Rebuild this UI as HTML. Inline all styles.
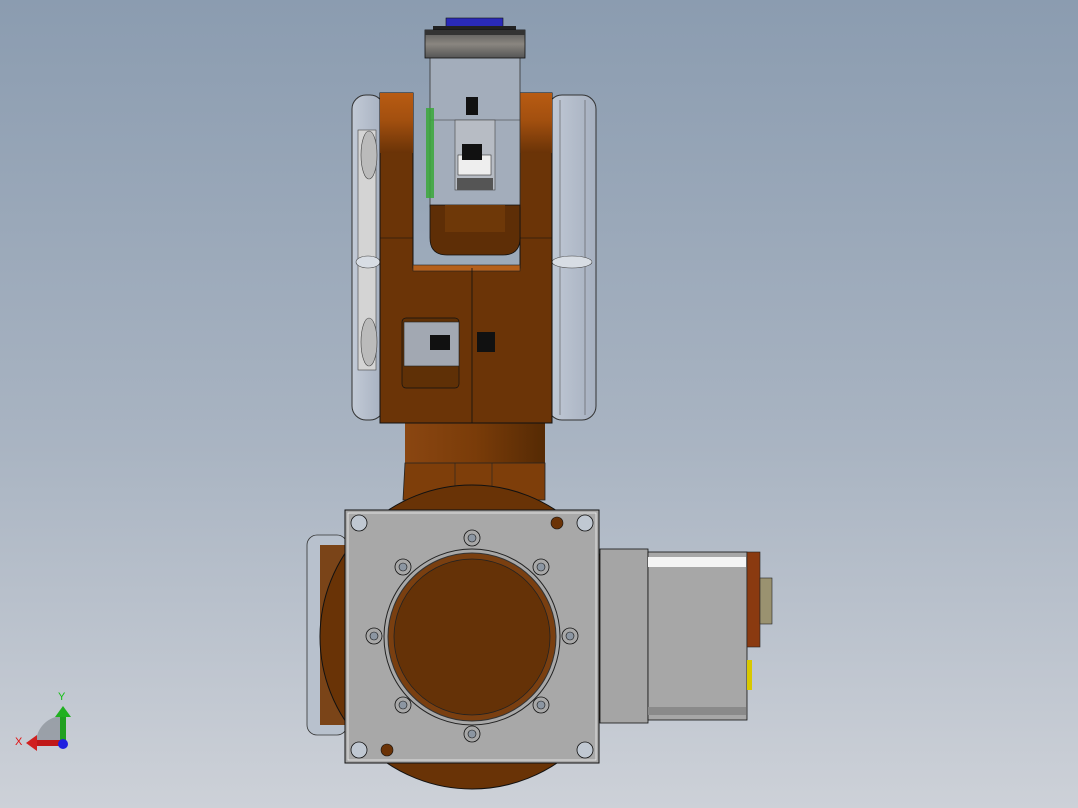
<!DOCTYPE html><html><head><style>html,body{margin:0;padding:0}body{width:1078px;height:808px;overflow:hidden;background:linear-gradient(#8b9cb0,#a9b4c2 55%,#cdd1d8)}svg{display:block}</style></head><body>
<svg width="1078" height="808" viewBox="0 0 1078 808" xmlns="http://www.w3.org/2000/svg" font-family="Liberation Sans, sans-serif">
<defs>
<linearGradient id="org" x1="0" y1="0" x2="0" y2="1"><stop offset="0" stop-color="#b85b12"/><stop offset="0.45" stop-color="#a3500f"/><stop offset="1" stop-color="#6a3307"/></linearGradient>
<linearGradient id="neck" x1="0" y1="0" x2="1" y2="0"><stop offset="0" stop-color="#8a4611"/><stop offset="0.5" stop-color="#7a3c09"/><stop offset="1" stop-color="#552a04"/></linearGradient>
<linearGradient id="cov" x1="0" y1="0" x2="1" y2="0"><stop offset="0" stop-color="#c2cad6"/><stop offset="1" stop-color="#a6b0c0"/></linearGradient>
<linearGradient id="flg" x1="0" y1="0" x2="0" y2="1"><stop offset="0" stop-color="#555"/><stop offset="0.5" stop-color="#8a8680"/><stop offset="1" stop-color="#555"/></linearGradient>
</defs>
<rect x="352" y="95" width="32" height="325" rx="14" fill="url(#cov)" stroke="#333" stroke-width="1"/>
<rect x="548" y="95" width="48" height="325" rx="14" fill="url(#cov)" stroke="#333" stroke-width="1"/>
<line x1="560" y1="100" x2="560" y2="415" stroke="#555" stroke-width=".6"/>
<line x1="585" y1="100" x2="585" y2="415" stroke="#555" stroke-width=".6"/>
<rect x="358" y="130" width="18" height="240" fill="#d4d4d4" stroke="#444" stroke-width=".6"/>
<ellipse cx="369" cy="155" rx="8" ry="24" fill="#bbb" stroke="#444" stroke-width=".6"/>
<ellipse cx="369" cy="342" rx="8" ry="24" fill="#bbb" stroke="#444" stroke-width=".6"/>
<ellipse cx="368" cy="262" rx="12" ry="6" fill="#d8dde4" stroke="#444" stroke-width=".6"/>
<ellipse cx="572" cy="262" rx="20" ry="6" fill="#d8dde4" stroke="#444" stroke-width=".6"/>
<rect x="405" y="418" width="140" height="48" fill="url(#neck)"/>
<path d="M380 93 H413 V268 H520 V93 H552 V423 H380 Z" fill="#6b3407" stroke="#111" stroke-width="1"/>
<rect x="380" y="93" width="33" height="60" fill="url(#org)"/>
<rect x="520" y="93" width="32" height="60" fill="url(#org)"/>
<rect x="413" y="265" width="107" height="6" fill="#b5601c" stroke="#222" stroke-width=".6"/>
<line x1="472" y1="268" x2="472" y2="423" stroke="#111" stroke-width=".8"/>
<line x1="380" y1="238" x2="413" y2="238" stroke="#111" stroke-width=".6"/>
<line x1="520" y1="238" x2="552" y2="238" stroke="#111" stroke-width=".6"/>
<rect x="430" y="57" width="90" height="150" fill="#a3adbb" stroke="#333" stroke-width=".8"/>
<line x1="430" y1="120" x2="520" y2="120" stroke="#333" stroke-width=".5"/>
<path d="M430 205 H520 V238 Q520 255 503 255 H447 Q430 255 430 238 Z" fill="#5e2e06" stroke="#111" stroke-width=".8"/>
<rect x="445" y="205" width="60" height="27" fill="#6e3808"/>
<rect x="455" y="120" width="40" height="70" fill="#b7bcc4" stroke="#444" stroke-width=".6"/>
<rect x="458" y="155" width="33" height="20" fill="#eee" stroke="#333" stroke-width=".6"/>
<rect x="462" y="144" width="20" height="16" fill="#111"/>
<rect x="466" y="97" width="12" height="18" fill="#111"/>
<rect x="457" y="178" width="36" height="12" fill="#555"/>
<rect x="426" y="108" width="8" height="90" fill="#3aa83a" opacity=".85"/>
<rect x="446" y="18" width="57" height="10" fill="#2a2ab8" stroke="#111" stroke-width=".6"/>
<rect x="433" y="26" width="83" height="5" fill="#222"/>
<rect x="425" y="30" width="100" height="28" fill="url(#flg)" stroke="#111" stroke-width=".8"/>
<rect x="425" y="30" width="100" height="5" fill="#333"/>
<rect x="402" y="318" width="57" height="70" rx="4" fill="#5f3006" stroke="#111" stroke-width=".7"/>
<rect x="404" y="322" width="55" height="44" fill="#a2a8b2" stroke="#222" stroke-width=".6"/>
<rect x="430" y="335" width="20" height="15" fill="#111"/>
<rect x="477" y="332" width="18" height="20" fill="#111"/>
<path d="M405 463 H545 V500 H403 Z" fill="#7e3e0a" stroke="#222" stroke-width=".8"/>
<line x1="455" y1="463" x2="455" y2="500" stroke="#222" stroke-width=".6"/>
<line x1="492" y1="463" x2="492" y2="500" stroke="#222" stroke-width=".6"/>
<rect x="307" y="535" width="40" height="200" rx="10" fill="#b8c1cd" stroke="#333" stroke-width=".8"/>
<rect x="320" y="545" width="28" height="180" fill="#7a4418"/>
<circle cx="472" cy="637" r="152" fill="#693306" stroke="#111" stroke-width="1"/>
<rect x="600" y="549" width="48" height="174" fill="#a5a5a5" stroke="#111" stroke-width=".8"/>
<rect x="648" y="552" width="99" height="168" fill="#a7a7a7" stroke="#111" stroke-width=".8"/>
<rect x="648" y="557" width="98" height="10" fill="#f4f4f4"/>
<rect x="648" y="707" width="98" height="8" fill="#8a8a8a"/>
<rect x="747" y="552" width="13" height="95" fill="#8a3a10" stroke="#222" stroke-width=".6"/>
<rect x="760" y="578" width="12" height="46" fill="#9a9270" stroke="#222" stroke-width=".6"/>
<rect x="747" y="660" width="5" height="30" fill="#d8c800"/>
<rect x="345" y="510" width="254" height="253" fill="#a8a8a8" stroke="#111" stroke-width="1"/>
<rect x="348" y="513" width="248" height="247" fill="none" stroke="#eee" stroke-width=".8"/>
<g fill="#c0c8d2" stroke="#111" stroke-width=".8">
<circle cx="359" cy="523" r="8"/><circle cx="585" cy="523" r="8"/><circle cx="359" cy="750" r="8"/><circle cx="585" cy="750" r="8"/></g>
<circle cx="557" cy="523" r="6" fill="#6b3307" stroke="#111" stroke-width=".6"/>
<circle cx="387" cy="750" r="6" fill="#6b3307" stroke="#111" stroke-width=".6"/>
<circle cx="472" cy="637" r="88" fill="#a8a8a8" stroke="#222" stroke-width="1"/>
<circle cx="472" cy="637" r="84" fill="#7a3f10" stroke="#333" stroke-width="1"/>
<circle cx="472" cy="637" r="78" fill="#653207" stroke="#222" stroke-width=".8"/>
<g fill="#a8a8a8" stroke="#111" stroke-width=".8">
<circle cx="472" cy="538" r="8"/><circle cx="472" cy="734" r="8"/><circle cx="374" cy="636" r="8"/><circle cx="570" cy="636" r="8"/>
<circle cx="403" cy="567" r="8"/><circle cx="541" cy="567" r="8"/><circle cx="403" cy="705" r="8"/><circle cx="541" cy="705" r="8"/></g>
<g fill="#8c96a2" stroke="#111" stroke-width=".6">
<circle cx="472" cy="538" r="4"/><circle cx="472" cy="734" r="4"/><circle cx="374" cy="636" r="4"/><circle cx="570" cy="636" r="4"/>
<circle cx="403" cy="567" r="4"/><circle cx="541" cy="567" r="4"/><circle cx="403" cy="705" r="4"/><circle cx="541" cy="705" r="4"/></g>
<path d="M63 743 V716 A27 27 0 0 0 36 743 Z" fill="#8e959e" opacity=".8"/>
<rect x="60" y="716" width="6" height="27" fill="#20a020"/>
<path d="M55 717 L63 706 L71 717 Z" fill="#20b020"/>
<rect x="36" y="740" width="27" height="6" fill="#c01818"/>
<path d="M37 735 L26 743 L37 751 Z" fill="#d02020"/>
<circle cx="63" cy="744" r="5" fill="#2020e0"/>
<text x="58" y="700" font-size="11" fill="#10c010">Y</text>
<text x="15" y="745" font-size="11" fill="#e01010">X</text>
</svg>
</body></html>
